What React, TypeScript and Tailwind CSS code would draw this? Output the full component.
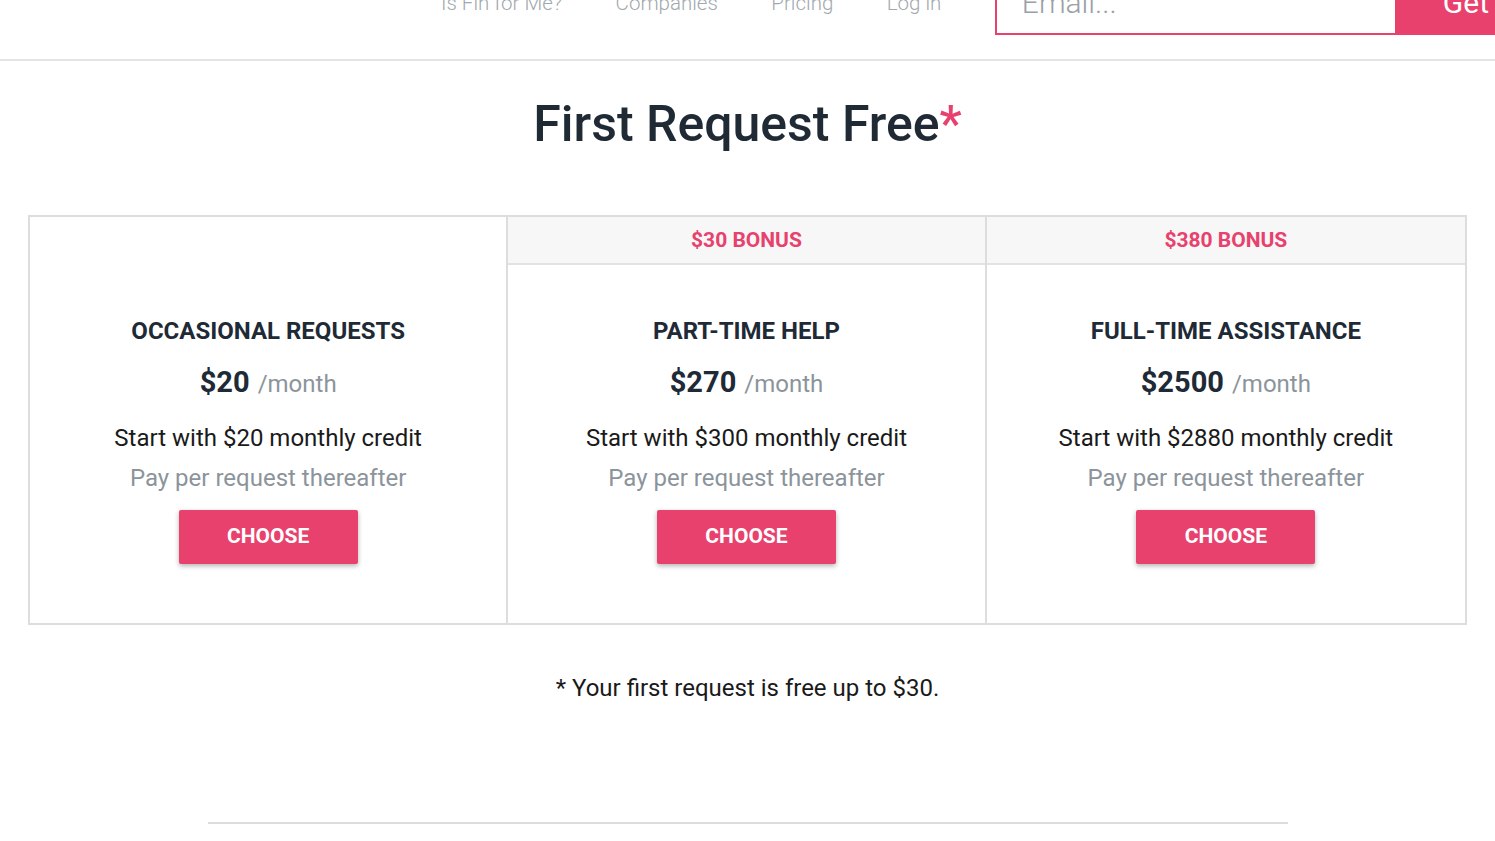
const plans = [
  {
    bonus: null,
    name: 'Occasional Requests',
    price: '$20',
    credit: 'Start with $20 monthly credit',
  },
  {
    bonus: '$30 BONUS',
    name: 'Part-Time Help',
    price: '$270',
    credit: 'Start with $300 monthly credit',
  },
  {
    bonus: '$380 BONUS',
    name: 'Full-Time Assistance',
    price: '$2500',
    credit: 'Start with $2880 monthly credit',
  },
];

const navLinks = ['Is Fin for Me?', 'Companies', 'Pricing', 'Log in'];

function Header() {
  return (
    <header className="h-[61px] w-full overflow-hidden border-b-2 border-[#e4e4e4]">
      <div className="-mt-[34px] flex items-center pl-[441px]">
        <nav className="flex items-center gap-[53.5px] pt-[5px] text-[20.5px] leading-[24px] font-light text-[#a2a8ad]">
          {navLinks.map((link) => (
            <a key={link} href="#" className="whitespace-nowrap">
              {link}
            </a>
          ))}
        </nav>
        <div className="ml-[53.5px] flex shrink-0">
          <input
            placeholder="Email..."
            className="h-[69px] w-[402px] border-2 border-[#e8416d] px-[25px] pt-[4px] text-[30px] font-light text-[#333] outline-none placeholder:text-[#9aa0a6]"
          />
          <button className="h-[69px] w-[240px] shrink-0 bg-[#e8416d] pl-[46px] pt-[4px] text-left text-[30px] font-normal whitespace-nowrap text-white">
            Get Started
          </button>
        </div>
      </div>
    </header>
  );
}

function PlanColumn({ plan }: { plan: (typeof plans)[number] }) {
  return (
    <div className="flex flex-col">
      {plan.bonus ? (
        <div className="flex h-[48px] items-center justify-center border-b-2 border-[#e2e2e2] bg-[#f7f7f7] pt-[2px] text-[21px] font-bold text-[#e8416d]">
          {plan.bonus}
        </div>
      ) : (
        <div className="h-[48px]" />
      )}
      <div className="flex flex-col items-center pt-[51px] pb-[59px] text-center">
        <h3 className="text-[24px] leading-[30px] font-bold uppercase text-[#1e2a36]">{plan.name}</h3>
        <p className="mt-[18px] leading-[36px]">
          <span className="text-[29px] font-bold text-[#1e2a36]">{plan.price}</span>
          <span className="ml-[8px] text-[24px] text-[#8c949b]">/month</span>
        </p>
        <p className="mt-[18px] text-[24px] leading-[30px] text-[#1a1a1a]">{plan.credit}</p>
        <p className="mt-[10px] text-[24px] leading-[30px] text-[#8c949b]">Pay per request thereafter</p>
        <button className="mt-[17px] h-[54px] w-[179px] rounded-[2px] bg-[#e8416d] text-[21px] font-bold text-white shadow-[0_2px_5px_rgba(0,0,0,0.3)]">
          CHOOSE
        </button>
      </div>
    </div>
  );
}

export default function App() {
  return (
    <div className="min-h-screen w-full overflow-hidden bg-white font-['Roboto',_'Liberation_Sans',_sans-serif]">
      <Header />
      <main className="pt-[33px]">
        <h1 className="text-center text-[50px] leading-[60px] font-medium text-[#1f2a35]">
          First Request Free<span className="text-[#e8416d]">*</span>
        </h1>
        <div className="mx-[28px] mt-[61px] grid grid-cols-3 divide-x-2 divide-[#dddddd] border-2 border-[#dddddd]">
          {plans.map((plan) => (
            <PlanColumn key={plan.name} plan={plan} />
          ))}
        </div>
        <p className="mt-[48px] text-center text-[24px] leading-[30px] text-[#1a1a1a]">
          * Your first request is free up to $30.
        </p>
        <hr className="mx-auto mt-[119px] w-[1080px] border-t-2 border-[#dddddd]" />
      </main>
    </div>
  );
}
